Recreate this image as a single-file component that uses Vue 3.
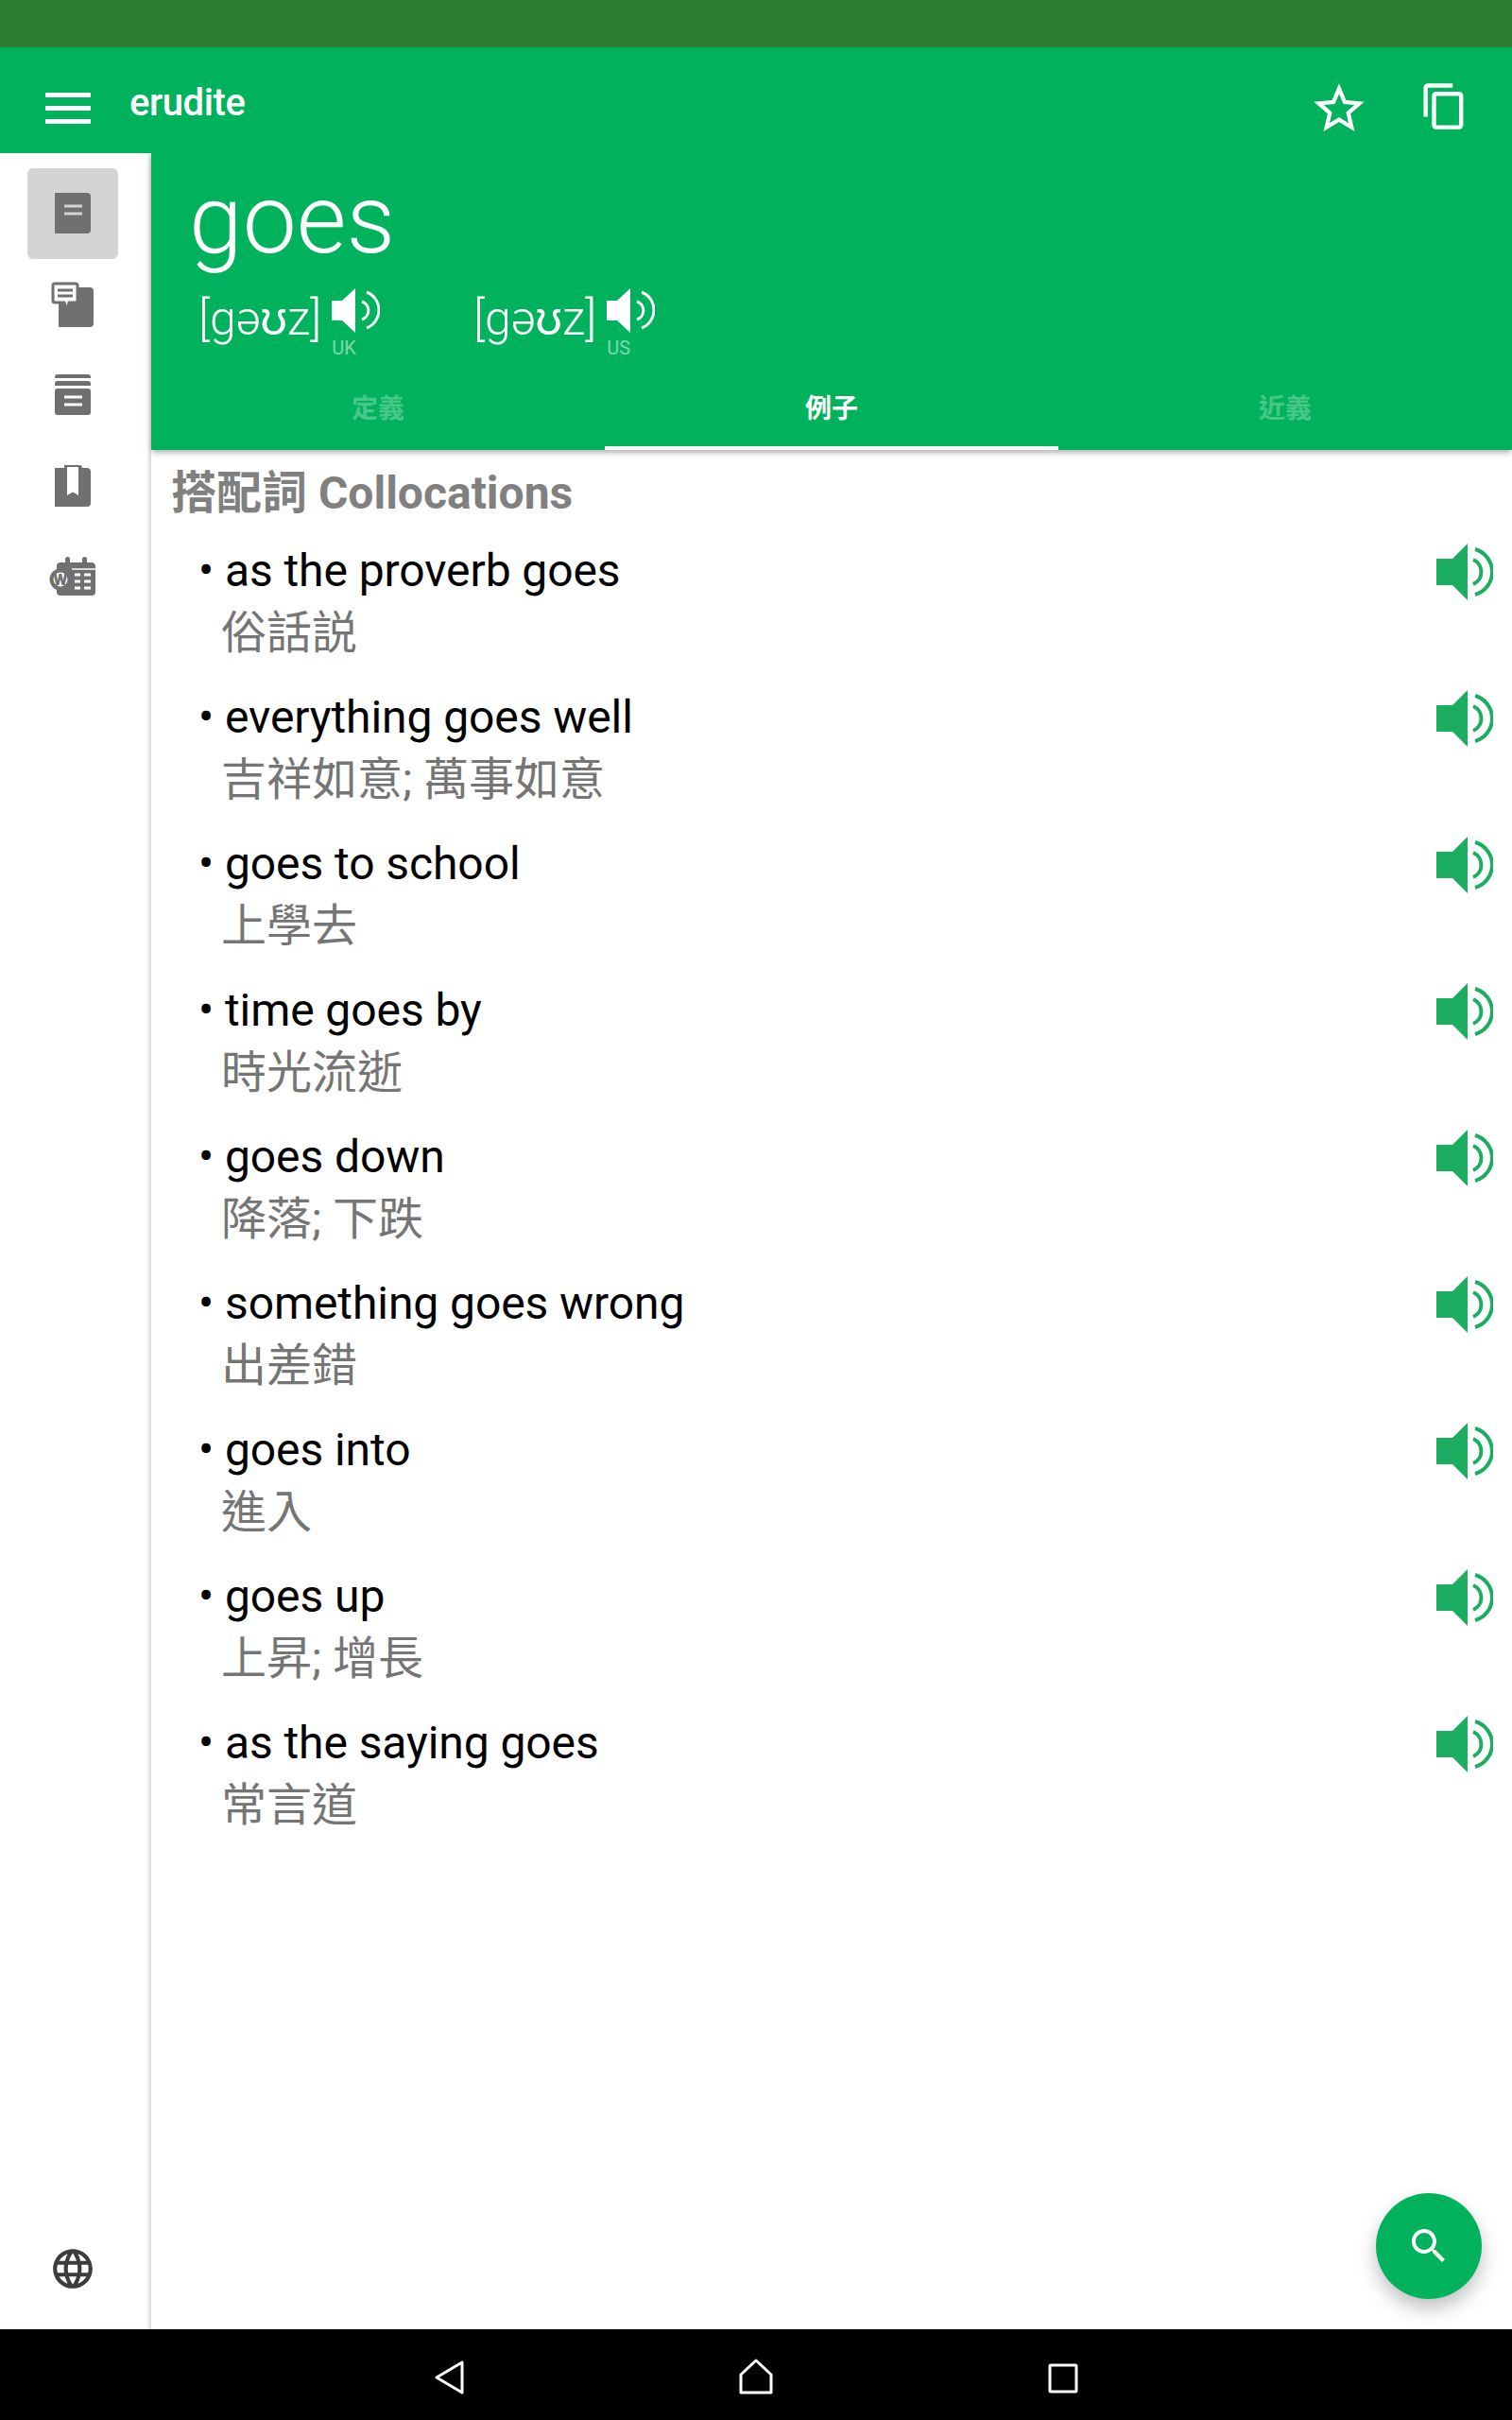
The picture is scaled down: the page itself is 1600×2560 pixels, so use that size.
<template>
  <div class="screen">
    <div class="status-bar"></div>

    <header class="app-bar">
      <button class="menu-btn"><span></span><span></span><span></span></button>
      <div class="app-title">erudite</div>
      <svg class="star" viewBox="0 0 24 24"><path d="M22 9.24l-7.19-.62L12 2 9.19 8.63 2 9.24l5.46 4.73L5.82 21 12 17.27 18.18 21l-1.63-7.03L22 9.24zM12 15.4l-3.76 2.27 1-4.28-3.32-2.88 4.38-.38L12 6.1l1.71 4.04 4.38.38-3.32 2.88 1 4.28L12 15.4z" /></svg>
      <svg class="copy" viewBox="0 0 24 24"><path d="M16 1H4c-1.1 0-2 .9-2 2v14h2V3h12V1zm3 4H8c-1.1 0-2 .9-2 2v14c0 1.1.9 2 2 2h11c1.1 0 2-.9 2-2V7c0-1.1-.9-2-2-2zm0 16H8V7h11v14z" /></svg>
    </header>

    <div class="body">
      <aside class="sidebar">
        <div class="side-top">
          <div class="side-item active">
            <svg viewBox="0 0 96 96">
              <path class="ico" d="M29 26H63Q67 26 67 30V65Q67 69 63 69H29Z" />
              <path class="cut-active" d="M39 40H58M39 48H58" />
            </svg>
          </div>
          <div class="side-item">
            <svg viewBox="0 0 96 96">
              <path class="ico" d="M33 30H66Q70 30 70 34V68Q70 72 66 72H33Z" />
              <path class="bubble" d="M29 26H51Q53 26 53 28V44Q53 46 51 46H44L42 55L39 46H29Q27 46 27 44V28Q27 26 29 26Z" />
              <path class="bubble-line" d="M32 33H48M32 39H48" />
            </svg>
          </div>
          <div class="side-item">
            <svg viewBox="0 0 96 96">
              <path class="ico" d="M32 26H64Q67 26 67 29V30H29V29Q29 26 32 26Z" />
              <path class="ico" d="M32 33H64Q67 33 67 36V38H29V36Q29 33 32 33Z" />
              <path class="ico" d="M32 41H64Q67 41 67 44V66Q67 69 64 69H32Q29 69 29 66V44Q29 41 32 41Z" />
              <path class="cut" d="M39 50H58M39 58H58" />
            </svg>
          </div>
          <div class="side-item">
            <svg viewBox="0 0 96 96">
              <path class="ico" d="M29 29H39V26H55Q58 26 58 29H63Q67 29 67 33V66Q67 70 63 70H29Z" />
              <path class="mark" d="M42 28H54V58L48 54.500L42 58Z" />
            </svg>
          </div>
          <div class="side-item">
            <svg viewBox="0 0 96 96">
              <path class="ico" d="M31 37Q31 33 35 33H40V29.500A2.500 2.500 0 0 1 45 29.500V33H58V29.500A2.500 2.500 0 0 1 63 29.500V33H67Q72 33 72 37V64Q72 68 68 68H35Q31 68 31 64Z" />
              <path class="cut-line" d="M47 40H72" />
              <path class="cut" d="M50 46H56M60 46H67M50 53H56M60 53H67M50 60H56M60 60H67" />
              <circle class="cal-ring" cx="35" cy="51" r="9.500" />
              <text class="cal-w" x="35" y="57">W</text>
            </svg>
          </div>
        </div>
        <div class="side-item">
          <svg class="globe" viewBox="0 0 24 24"><path d="M11.990 2C6.470 2 2 6.480 2 12s4.470 10 9.990 10C17.520 22 22 17.520 22 12S17.520 2 11.990 2zm6.930 6h-2.950c-.32-1.250-.78-2.450-1.380-3.560 1.840.63 3.370 1.910 4.330 3.560zM12 4.040c.83 1.200 1.480 2.530 1.910 3.960h-3.820c.43-1.430 1.080-2.760 1.910-3.960zM4.260 14C4.100 13.360 4 12.690 4 12s.1-1.360.26-2h3.380c-.08.66-.14 1.320-.14 2 0 .68.06 1.340.14 2H4.260zm.82 2h2.950c.32 1.250.78 2.450 1.380 3.560-1.840-.63-3.370-1.900-4.330-3.560zm2.950-8H5.080c.96-1.660 2.490-2.930 4.330-3.560C8.810 5.550 8.350 6.750 8.030 8zM12 19.960c-.83-1.200-1.480-2.530-1.910-3.960h3.820c-.43 1.430-1.080 2.760-1.910 3.960zM14.340 14H9.660c-.09-.66-.16-1.320-.16-2 0-.68.07-1.350.16-2h4.680c.09.65.16 1.320.16 2 0 .68-.07 1.340-.16 2zm.25 5.560c.6-1.110 1.060-2.310 1.380-3.560h2.950c-.96 1.650-2.490 2.930-4.330 3.560zM16.360 14c.08-.66.14-1.320.14-2 0-.68-.06-1.340-.14-2h3.380c.16.64.26 1.310.26 2s-.1 1.360-.26 2h-3.380z" /></svg>
        </div>
      </aside>

      <main class="main">
        <section class="word-head">
          <h1 class="word">goes</h1>
          <div class="prons">
            <div v-for="p in prons" :key="p.label" class="pron">
              <span class="ipa">[gəʊz]</span>
              <div class="pron-side">
                <svg class="pron-speaker" viewBox="0 0 51 47">
                  <path class="fill-white" d="M0 13H11L25 0V47L11 34H0Z" />
                  <path class="wave-white" d="M32 14A10 10 0 0 1 32 33M37 4A20.400 20.400 0 0 1 37 42" />
                </svg>
                <span class="pron-label">{{ p.label }}</span>
              </div>
            </div>
          </div>
          <nav class="tabs">
            <div v-for="t in tabs" :key="t.label" class="tab" :class="{ active: t.active }">{{ t.label }}</div>
          </nav>
        </section>

        <section class="content">
          <h2 class="section-title">搭配詞 Collocations</h2>
          <div v-for="row in rows" :key="row.en" class="row">
            <div class="row-text">
              <div class="en">• {{ row.en }}</div>
              <div class="zh">{{ row.zh }}</div>
            </div>
            <svg class="row-speaker" viewBox="0 0 60 60">
              <path class="fill-green" d="M0 16H17L33 0V60L17 44H0Z" />
              <path class="wave-green" d="M39 17A14.200 14.200 0 0 1 39 43M41 6A25 25 0 0 1 41 54" />
            </svg>
          </div>
        </section>
      </main>
    </div>

    <footer class="nav-bar">
      <svg viewBox="0 0 60 60"><path d="M44 15V47L17 31Z" /></svg>
      <svg viewBox="0 0 60 60"><path d="M30 13L46 28V47H14V28Z" /></svg>
      <svg viewBox="0 0 60 60"><rect x="16" y="18" width="28" height="28" rx="1" /></svg>
    </footer>

    <button class="fab">
      <svg viewBox="0 0 24 24"><path d="M15.500 14h-.79l-.28-.27C15.410 12.590 16 11.110 16 9.500 16 5.910 13.090 3 9.500 3S3 5.910 3 9.500 5.910 16 9.500 16c1.610 0 3.090-.59 4.230-1.570l.27.28v.79l5 4.990L20.490 19l-4.990-5zm-6 0C7.010 14 5 11.990 5 9.500S7.010 5 9.500 5 14 7.010 14 9.500 11.990 14 9.500 14z" /></svg>
    </button>
  </div>
</template>

<script setup>
const prons = [{ label: 'UK' }, { label: 'US' }]

const tabs = [
  { label: '定義' },
  { label: '例子', active: true },
  { label: '近義' }
]

const rows = [
  { en: 'as the proverb goes', zh: '俗話説' },
  { en: 'everything goes well', zh: '吉祥如意; 萬事如意' },
  { en: 'goes to school', zh: '上學去' },
  { en: 'time goes by', zh: '時光流逝' },
  { en: 'goes down', zh: '降落; 下跌' },
  { en: 'something goes wrong', zh: '出差錯' },
  { en: 'goes into', zh: '進入' },
  { en: 'goes up', zh: '上昇; 增長' },
  { en: 'as the saying goes', zh: '常言道' }
]
</script>

<style>
body {
  margin: 0;
}
</style>

<style scoped>
.screen {
  position: relative;
  display: flex;
  flex-direction: column;
  width: 1600px;
  height: 2560px;
  overflow: hidden;
  background: #fff;
  font-family: Roboto, "Noto Sans CJK TC", sans-serif;
}

.status-bar {
  height: 50px;
  background: #2e7d32;
}

/* ---------- app bar ---------- */
.app-bar {
  position: relative;
  z-index: 1;
  display: flex;
  align-items: center;
  height: 112px;
  background: #00b25c;
  color: #fff;
}

.menu-btn {
  display: flex;
  flex-direction: column;
  gap: 9px;
  width: 48px;
  margin: 16px 0 0 48px;
  padding: 0;
  border: 0;
  background: none;
}

.menu-btn span {
  height: 5px;
  background: #fff;
}

.app-title {
  flex: 1;
  margin: 4px 0 0 41px;
  font-size: 40px;
  font-weight: 500;
  letter-spacing: -0.4px;
}

.star {
  width: 64px;
  height: 64px;
  margin: 18px 53px 0 0;
  fill: #fff;
}

.copy {
  width: 53px;
  height: 53px;
  margin: 13px 45px 0 0;
  fill: #fff;
}

/* ---------- sidebar ---------- */
.body {
  flex: 1;
  display: flex;
  min-height: 0;
}

.sidebar {
  display: flex;
  flex-direction: column;
  justify-content: space-between;
  box-sizing: border-box;
  width: 160px;
  padding: 16px 0;
  box-shadow: inset -5px 0 4px -3px rgba(0, 0, 0, 0.18);
}

.side-item {
  display: flex;
  align-items: center;
  justify-content: center;
  width: 96px;
  height: 96px;
  margin-left: 29px;
  border-radius: 6px;
}

.side-item.active {
  background: #d4d4d4;
}

.side-item svg {
  width: 96px;
  height: 96px;
}

.side-item svg.globe {
  width: 50px;
  height: 50px;
  fill: #3c3c3c;
}

.ico {
  fill: #707070;
}

.cut-active,
.cut,
.cut-line {
  fill: none;
  stroke-width: 3px;
}

.cut-active {
  stroke: #d4d4d4;
}

.cut {
  stroke: #fff;
}

.cut-line {
  stroke: #fff;
  stroke-width: 1.500px;
}

.bubble {
  fill: #fff;
  stroke: #707070;
  stroke-width: 3px;
}

.bubble-line {
  fill: none;
  stroke: #707070;
  stroke-width: 3px;
}

.mark {
  fill: #fff;
}

.cal-ring {
  fill: #fff;
  stroke: #707070;
  stroke-width: 4px;
}

.cal-w {
  fill: #707070;
  font-size: 17px;
  font-weight: 900;
  text-anchor: middle;
}

/* ---------- word header ---------- */
.main {
  flex: 1;
  min-width: 0;
}

.word-head {
  position: relative;
  background: #00b25c;
  color: #fff;
  box-shadow: 0 4px 6px -1px rgba(0, 0, 0, 0.3);
}

.word {
  margin: 0;
  padding: 14px 0 0 40px;
  font-size: 102px;
  font-weight: 300;
  line-height: 112px;
}

.prons {
  display: flex;
  height: 108px;
  padding-left: 50px;
}

.pron {
  display: flex;
  width: 291px;
  height: 92px;
}

.ipa {
  margin: 21px 0 0 0;
  font-size: 50px;
  font-weight: 300;
  line-height: 56px;
}

.pron-side {
  display: flex;
  flex-direction: column;
  margin-left: 11px;
  padding-top: 17px;
}

.pron-speaker {
  width: 51px;
  height: 47px;
}

.fill-white {
  fill: #fff;
}

.wave-white {
  fill: none;
  stroke: #fff;
  stroke-width: 3px;
}

.pron-label {
  margin-top: 4px;
  font-size: 20px;
  line-height: 24px;
  color: rgba(255, 255, 255, 0.5);
}

.tabs {
  display: flex;
  height: 80px;
}

.tab {
  flex: 1;
  box-sizing: border-box;
  padding-top: 17px;
  font-size: 28px;
  font-weight: 700;
  line-height: 40px;
  text-align: center;
  color: rgba(255, 255, 255, 0.3);
}

.tab.active {
  color: #fff;
  border-bottom: 4px solid #fff;
}

/* ---------- list ---------- */
.content {
  padding: 16px 20px 0 21px;
}

.section-title {
  margin: 0 0 19px;
  font-size: 48px;
  font-weight: 700;
  line-height: 60px;
  color: #808080;
}

.row {
  display: flex;
  justify-content: space-between;
  height: 155px;
  padding-left: 29px;
}

.en {
  font-size: 48px;
  line-height: 66px;
  letter-spacing: -0.08px;
  color: #000;
}

.zh {
  margin-left: 24px;
  font-size: 48px;
  line-height: 66px;
  color: #757575;
}

.row-speaker {
  width: 60px;
  height: 60px;
  margin-top: 4px;
}

.fill-green {
  fill: #1cae60;
}

.wave-green {
  fill: none;
  stroke: #1cae60;
  stroke-width: 4px;
}

/* ---------- system nav ---------- */
.nav-bar {
  display: flex;
  align-items: center;
  justify-content: center;
  gap: 265px;
  height: 96px;
  padding-top: 4px;
  box-sizing: border-box;
  background: #000;
}

.nav-bar svg {
  width: 60px;
  height: 60px;
  fill: none;
  stroke: #fff;
  stroke-width: 3px;
  stroke-linejoin: round;
}

/* ---------- search button ---------- */
.fab {
  position: absolute;
  right: 32px;
  bottom: 128px;
  display: flex;
  align-items: center;
  justify-content: center;
  width: 112px;
  height: 112px;
  padding: 0;
  border: 0;
  border-radius: 50%;
  background: #00b25c;
  box-shadow: 0 10px 20px rgba(0, 0, 0, 0.25);
}

.fab svg {
  width: 48px;
  height: 48px;
  fill: #fff;
}
</style>
